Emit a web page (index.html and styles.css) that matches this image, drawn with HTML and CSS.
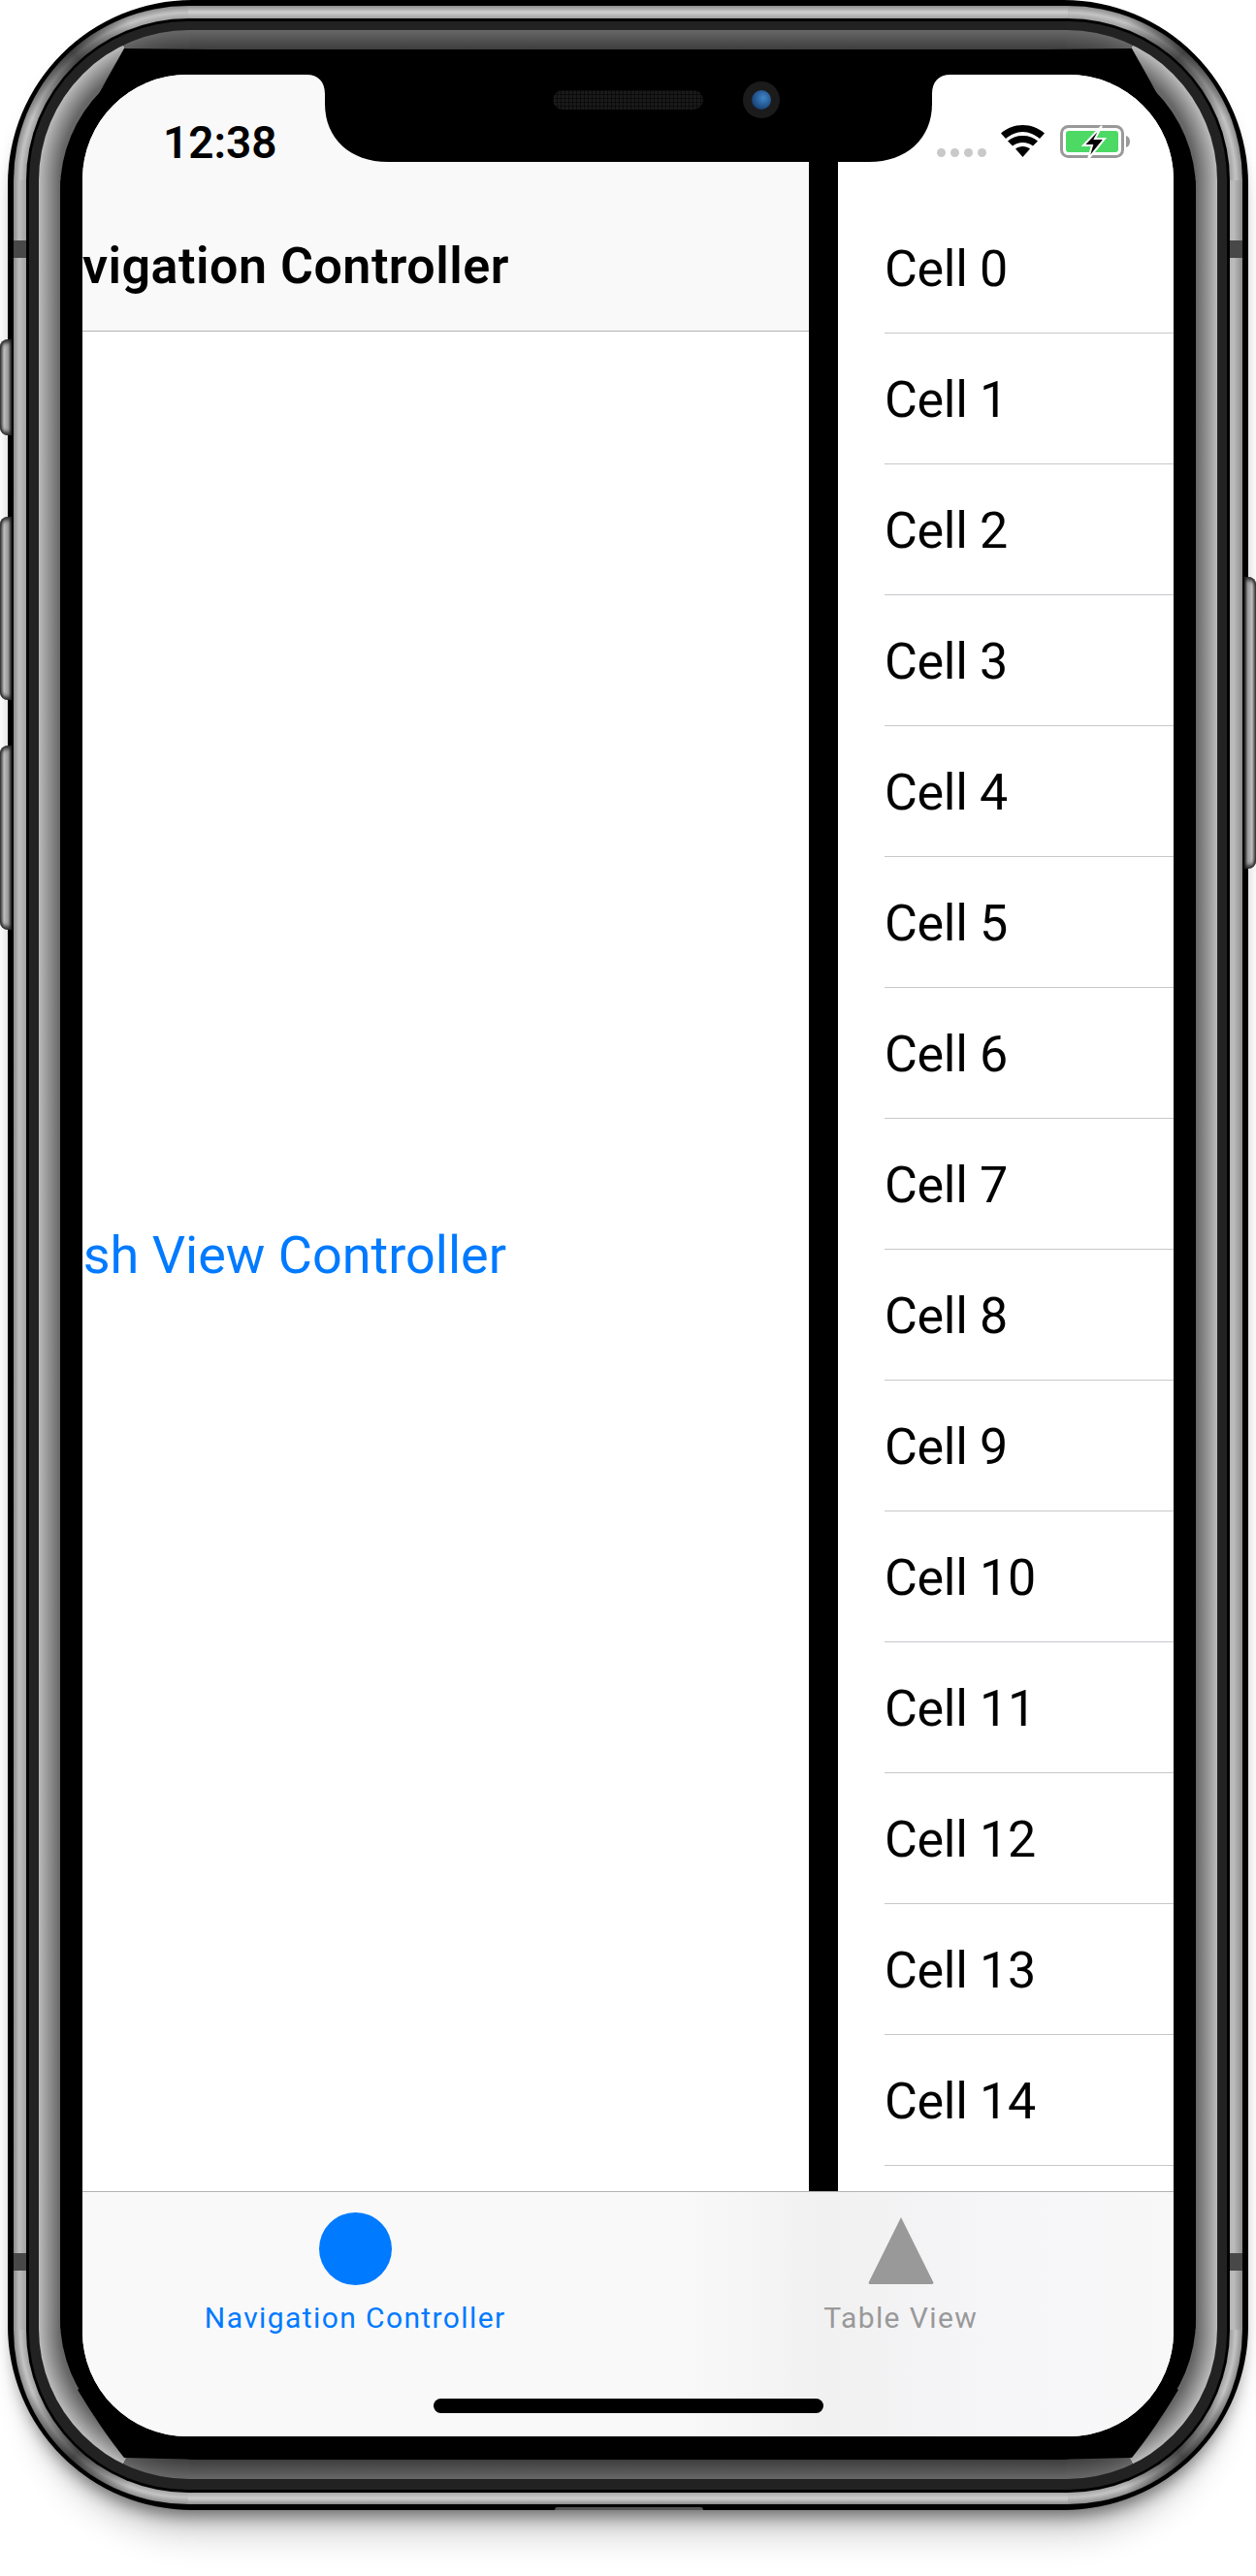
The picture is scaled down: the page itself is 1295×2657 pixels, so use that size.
FILE: index.html
```html
<!DOCTYPE html>
<html lang="en">

<head>
    <meta charset="UTF-8">
    <meta name="viewport" content="width=device-width, initial-scale=1.0">
    <title>Navigation Controller</title>
    <link rel="stylesheet" href="styles.css">
</head>

<body>
    <div class="phone">
        <span class="side-btn btn-a"></span>
        <span class="side-btn btn-b"></span>
        <span class="side-btn btn-c"></span>
        <span class="side-btn btn-power"></span>
        <span class="bottom-btn"></span>

        <div class="band-outer">
            <span class="antenna ant-tl"></span>
            <span class="antenna ant-tr"></span>
            <span class="antenna ant-bl"></span>
            <span class="antenna ant-br"></span>
            <div class="gap">
                <div class="dark-ring">
                    <div class="band-inner">
                        <div class="bezel">
                            <!-- black wedges where the silver tapers off at each corner -->
                            <svg class="wedges" width="1171" height="2486" viewBox="62 51 1171 2486">
                                <path d="M80 135C95 110 112 78 128 50L215 51V140H100z" />
                                <path d="M1215 135C1200 110 1183 78 1167 50L1080 51V140H1195z" />
                                <path d="M80 2465C95 2490 112 2515 128 2535L215 2537V2450H100z" />
                                <path d="M1215 2465C1200 2490 1183 2515 1167 2535L1080 2537V2450H1195z" />
                            </svg>
                            <div class="screen">
                                <div class="panes">
                                    <div class="left-pane">
                                        <div class="navbar">
                                            <div class="time">12:38</div>
                                            <div class="nav-title">Navigation Controller</div>
                                        </div>
                                        <div class="left-body">
                                            <a class="push-link">Push View Controller</a>
                                        </div>
                                    </div>
                                    <div class="divider"></div>
                                    <div class="table-pane">
                                        <div class="status-icons">
                                            <span class="dots"><i></i><i></i><i></i><i></i></span>
                                            <svg class="wifi" width="45" height="33" viewBox="0 0 45 33">
                                                <path d="M22.500 0C14 0 6 3.200 0 8.500L5 14C10 10 16 7 22.500 7S35 10 40 14L45 8.500C39 3.200 31 0 22.500 0z" />
                                                <path d="M22.500 11C16 11 11 13 7 16.500L12 21.500C15 19.500 18.500 18 22.500 18S30 19.500 33 21.500L38 16.500C34 13 29 11 22.500 11z" />
                                                <path d="M22.500 22C19.500 22 17 23 15 24.500L22.500 33L30 24.500C28 23 25.500 22 22.500 22z" />
                                            </svg>
                                            <svg class="battery" width="74" height="38" viewBox="0 0 74 38">
                                                <rect x="1.500" y="3.500" width="63" height="31" rx="7" fill="none" stroke="#999" stroke-width="3" />
                                                <path d="M68 13c2.500 .5 4 3 4 6s-1.500 5.500-4 6z" fill="#999" />
                                                <rect x="6" y="8" width="54" height="22" rx="3" fill="#4cd964" />
                                                <path d="M43 3L24 23H33L29 37L46 16H36z" fill="#000" stroke="#fff" stroke-width="2" />
                                            </svg>
                                        </div>
                                        <div class="cell">Cell 0</div>
                                        <div class="cell">Cell 1</div>
                                        <div class="cell">Cell 2</div>
                                        <div class="cell">Cell 3</div>
                                        <div class="cell">Cell 4</div>
                                        <div class="cell">Cell 5</div>
                                        <div class="cell">Cell 6</div>
                                        <div class="cell">Cell 7</div>
                                        <div class="cell">Cell 8</div>
                                        <div class="cell">Cell 9</div>
                                        <div class="cell">Cell 10</div>
                                        <div class="cell">Cell 11</div>
                                        <div class="cell">Cell 12</div>
                                        <div class="cell">Cell 13</div>
                                        <div class="cell">Cell 14</div>
                                    </div>
                                </div>
                                <div class="tabbar">
                                    <div class="tab active">
                                        <span class="tab-circle"></span>
                                        <span class="tab-label">Navigation Controller</span>
                                    </div>
                                    <div class="tab">
                                        <svg class="tab-triangle" width="68" height="70" viewBox="0 0 68 70">
                                            <path d="M34 1L67 67.500a1.500 1.500 0 0 1-1.300 2.500H2.300a1.500 1.500 0 0 1-1.300-2.500z" fill="#999" />
                                        </svg>
                                        <span class="tab-label">Table View</span>
                                    </div>
                                </div>
                                <div class="home-bar"></div>

                                <!-- notch sits over the top of the screen -->
                                <svg class="notch" width="664" height="90" viewBox="0 0 664 90">
                                    <path d="M0 0C12 0 19 7 19 20V30C19 66 45 90 84 90H580C619 90 645 66 645 30V20C645 7 652 0 664 0z" fill="#000" />
                                </svg>
                                <div class="speaker"></div>
                                <div class="camera"><span></span></div>
                            </div>
                        </div>
                    </div>
                </div>
            </div>
        </div>
    </div>
</body>

</html>
```

FILE: styles.css
```css
body {
    margin: 0;
    padding: 0;
    height: 2657px;
    background-color: #fff;
    font-family: Roboto, "Liberation Sans", sans-serif;
}

/* phone body, each ring is one nested box */
.phone {
    position: relative;
    box-sizing: border-box;
    width: 1279px;
    height: 2589px;
    margin-left: 8px;
    padding: 6px;
    background-color: #000;
    border-radius: 190px;
    box-shadow: 0 14px 18px -8px rgba(0, 0, 0, 0.5), 0 46px 36px -22px rgba(0, 0, 0, 0.2);
}

.band-outer {
    position: relative;
    box-sizing: border-box;
    height: 100%;
    padding: 13px 13px 12px;
    border-radius: 180px;
    background:
        conic-gradient(from 292deg at 100% 100%, transparent 0, rgba(0, 0, 0, 0.6) 26deg, transparent 48deg) 0 0 / 180px 180px no-repeat,
        conic-gradient(from 20deg at 0 100%, transparent 0, rgba(0, 0, 0, 0.6) 22deg, transparent 48deg) 100% 0 / 180px 180px no-repeat,
        conic-gradient(from 200deg at 100% 0, transparent 0, rgba(0, 0, 0, 0.6) 22deg, transparent 48deg) 0 100% / 180px 180px no-repeat,
        conic-gradient(from 112deg at 0 0, transparent 0, rgba(0, 0, 0, 0.6) 26deg, transparent 48deg) 100% 100% / 180px 180px no-repeat,
        radial-gradient(circle 180px at 100% 100%, #a0a0a0 167px, #c4c4c4 173px, #8c8c8c 180px) 0 0 / 180px 180px no-repeat,
        radial-gradient(circle 180px at 0 100%, #a0a0a0 167px, #c4c4c4 173px, #8c8c8c 180px) 100% 0 / 180px 180px no-repeat,
        radial-gradient(circle 180px at 100% 0, #a0a0a0 167px, #c4c4c4 173px, #8c8c8c 180px) 0 100% / 180px 180px no-repeat,
        radial-gradient(circle 180px at 0 0, #a0a0a0 167px, #c4c4c4 173px, #8c8c8c 180px) 100% 100% / 180px 180px no-repeat,
        linear-gradient(90deg, #8c8c8c, #bdbdbd 45%, #a0a0a0) 0 0 / 13px 100% no-repeat,
        linear-gradient(270deg, #8c8c8c, #bdbdbd 70%, #b4b4b4) 100% 0 / 13px 100% no-repeat,
        linear-gradient(180deg, #8c8c8c, #cfcfcf 50%, #a0a0a0) 0 0 / 100% 13px no-repeat,
        linear-gradient(0deg, #8c8c8c, #cfcfcf 50%, #a8a8a8) 0 100% / 100% 12px no-repeat;
}

.antenna {
    position: absolute;
    width: 13px;
    height: 18px;
    background-color: #484848;
}

.ant-tl {
    left: 0;
    top: 242px;
}

.ant-tr {
    right: 0;
    top: 242px;
}

.ant-bl {
    left: 0;
    top: 2318px;
}

.ant-br {
    right: 0;
    top: 2318px;
}

.gap {
    box-sizing: border-box;
    height: 100%;
    padding: 3px;
    background-color: #000;
    border-radius: 167px;
}

.dark-ring {
    box-sizing: border-box;
    height: 100%;
    padding: 9px 10px 11px;
    background-color: #222;
    border-radius: 163px;
}

.band-inner {
    box-sizing: border-box;
    height: 100%;
    padding: 20px 22px;
    border-radius: 155px;
    background:
        conic-gradient(from 334deg at 100% 100%, rgba(20, 20, 20, 0.5) 0 26deg, transparent 0) 0 0 / 155px 155px no-repeat,
        conic-gradient(from 0deg at 0 100%, rgba(20, 20, 20, 0.5) 0 26deg, transparent 0) 100% 0 / 155px 155px no-repeat,
        conic-gradient(from 180deg at 100% 0, rgba(20, 20, 20, 0.5) 0 26deg, transparent 0) 0 100% / 155px 155px no-repeat,
        conic-gradient(from 154deg at 0 0, rgba(20, 20, 20, 0.5) 0 26deg, transparent 0) 100% 100% / 155px 155px no-repeat,
        radial-gradient(circle 155px at 100% 100%, #666 133px, #bbb 155px) 0 0 / 155px 155px no-repeat,
        radial-gradient(circle 155px at 0 100%, #666 133px, #bbb 155px) 100% 0 / 155px 155px no-repeat,
        radial-gradient(circle 155px at 100% 0, #666 133px, #bbb 155px) 0 100% / 155px 155px no-repeat,
        radial-gradient(circle 155px at 0 0, #666 133px, #bbb 155px) 100% 100% / 155px 155px no-repeat,
        linear-gradient(90deg, #bbb, #666) 0 0 / 22px 100% no-repeat,
        linear-gradient(270deg, #bbb, #666) 100% 0 / 22px 100% no-repeat,
        linear-gradient(180deg, #676767, #3d3d3d) 0 0 / 100% 20px no-repeat,
        linear-gradient(0deg, #676767, #3d3d3d) 0 100% / 100% 20px no-repeat;
}

.bezel {
    position: relative;
    box-sizing: border-box;
    height: 100%;
    padding: 26px 23px 24px;
    background-color: #000;
    border-radius: 145px;
}

.wedges {
    position: absolute;
    left: 0;
    top: 0;
    overflow: visible;
}

.screen {
    position: relative;
    display: flex;
    flex-direction: column;
    height: 100%;
    overflow: hidden;
    background-color: #fff;
    border-radius: 108px;
}

/* side buttons stick out behind the body */
.side-btn {
    position: absolute;
    width: 12px;
    background: linear-gradient(90deg, #333, #bdbdbd 35%, #999 70%, #222);
    border-radius: 8px 0 0 8px;
    box-shadow: inset 0 5px 4px -2px #222, inset 0 -5px 4px -2px #222;
}

.btn-a {
    left: -8px;
    top: 350px;
    height: 99px;
}

.btn-b {
    left: -8px;
    top: 533px;
    height: 189px;
}

.btn-c {
    left: -8px;
    top: 769px;
    height: 190px;
}

.btn-power {
    right: -8px;
    top: 595px;
    height: 301px;
    border-radius: 0 8px 8px 0;
    background: linear-gradient(270deg, #333, #bdbdbd 35%, #999 70%, #222);
}

.bottom-btn {
    position: absolute;
    left: 564px;
    top: 2586px;
    width: 153px;
    height: 3px;
    background-color: #555;
    border-radius: 6px 6px 0 0;
}

.panes {
    flex: 1;
    display: flex;
    min-height: 0;
}

.left-pane {
    width: 749px;
    display: flex;
    flex-direction: column;
    overflow: hidden;
}

.navbar {
    box-sizing: border-box;
    height: 265px;
    background-color: #f9f9f9;
    border-bottom: 1px solid #b2b2b2;
}

.time {
    padding: 43px 0 0 83px;
    font-size: 46px;
    font-weight: 600;
    line-height: 54px;
    color: #000;
}

.nav-title {
    display: flex;
    justify-content: flex-end;
    padding: 70px 309px 0 0;
    font-size: 52px;
    font-weight: 600;
    letter-spacing: 0.5px;
    line-height: 62px;
    white-space: nowrap;
    color: #000;
}

.left-body {
    flex: 1;
    display: flex;
    justify-content: flex-end;
    align-items: center;
    padding: 0 312px 14px 0;
    background-color: #fff;
}

.push-link {
    font-size: 54px;
    white-space: nowrap;
    color: #007aff;
}

.divider {
    width: 30px;
    background-color: #000;
}

.table-pane {
    flex: 1;
    overflow: hidden;
    background-color: #fff;
}

.status-icons {
    box-sizing: border-box;
    height: 132px;
    display: flex;
    justify-content: flex-end;
    align-items: flex-start;
    padding: 50px 43px 0 0;
}

.dots {
    display: flex;
    gap: 5px;
    margin: 26px 15px 0 0;
}

.dots i {
    width: 9px;
    height: 9px;
    border-radius: 50%;
    background-color: #c9c9c9;
}

.wifi {
    margin: 2px 16px 0 0;
}

.cell {
    box-sizing: border-box;
    height: 135px;
    margin-left: 48px;
    border-bottom: 1px solid #c8c7cc;
    font-size: 52px;
    letter-spacing: -0.3px;
    line-height: 137px;
    color: #000;
}

.tabbar {
    box-sizing: border-box;
    height: 253px;
    display: grid;
    grid-template-columns: 1fr 1fr;
    border-top: 1px solid #b2b2b2;
    background: linear-gradient(90deg, #f9f9f9 55%, #f1f1f2 68%, #f6f6f8 85%, #f8f8f9);
}

.tab {
    display: flex;
    flex-direction: column;
    align-items: center;
    padding-top: 21px;
}

.tab-circle {
    width: 75px;
    height: 75px;
    border-radius: 50%;
    background-color: #007aff;
}

.tab-triangle {
    display: block;
    margin-top: 4px;
    margin-bottom: 1px;
}

.tab-label {
    margin-top: 16px;
    font-size: 30px;
    letter-spacing: 1.4px;
    line-height: 36px;
    color: #999;
}

.active .tab-label {
    color: #007aff;
}

.home-bar {
    position: absolute;
    left: 362px;
    bottom: 24px;
    width: 402px;
    height: 15px;
    background-color: #000;
    border-radius: 8px;
}

.notch {
    position: absolute;
    left: 231px;
    top: 0;
}

.speaker {
    position: absolute;
    left: 485px;
    top: 16px;
    width: 155px;
    height: 20px;
    border-radius: 10px;
    background-color: #1a1a1a;
    background-image:
        linear-gradient(90deg, rgba(0, 0, 0, 0.5) 1px, transparent 1px),
        linear-gradient(rgba(0, 0, 0, 0.5) 1px, transparent 1px);
    background-size: 4px 4px;
}

.camera {
    position: absolute;
    left: 681px;
    top: 7px;
    width: 38px;
    height: 38px;
    display: flex;
    align-items: center;
    justify-content: center;
    border-radius: 50%;
    background-color: #1b1b1b;
}

.camera span {
    width: 20px;
    height: 20px;
    border-radius: 50%;
    background: radial-gradient(circle at 60% 40%, #3f86c9, #173f73 75%);
}
```
